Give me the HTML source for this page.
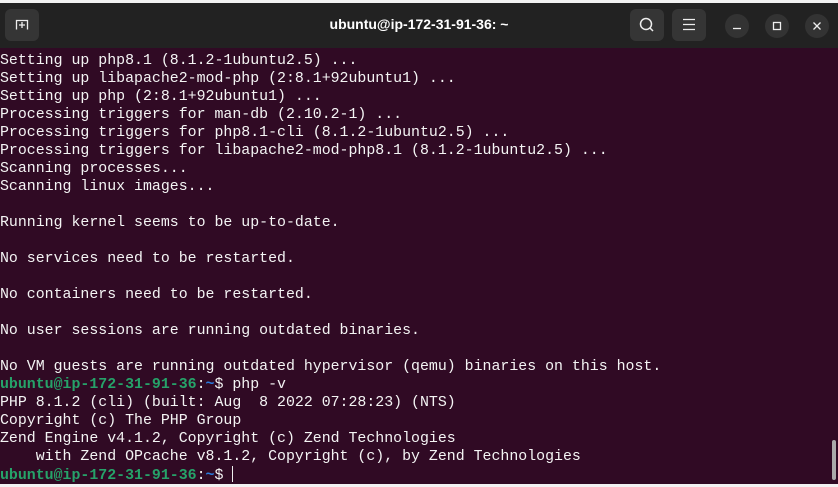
<!DOCTYPE html>
<html><head><meta charset="utf-8"><style>
html,body{margin:0;padding:0;width:838px;height:487px;overflow:hidden;background:#f2f2f2}
.win{position:absolute;left:0;top:3px;width:838px;height:481px;background:#300a24}
.hdr{position:absolute;left:0;top:0;width:838px;height:45px;background:#222222}
.title{position:absolute;left:0;width:838px;top:13px;text-align:center;color:#fff;font:bold 14px "Liberation Sans",sans-serif}
.btn{position:absolute;top:6px;width:34px;height:32px;border-radius:6px;background:#353535}
.cb{position:absolute;top:11px;width:24px;height:24px;border-radius:12px;background:#333}
pre{position:absolute;left:0;top:49px;margin:0;font:14.9px/18px "Liberation Mono",monospace;color:#f4f4f4;white-space:pre}
.g{color:#26a269;font-weight:bold}.b{color:#2a7bde;font-weight:bold}
.sb{position:absolute;left:832px;top:437px;width:4px;height:40px;border-radius:2px;background:#aaa}
</style></head><body>
<div class="win">
<div class="hdr">
<div class="btn" style="left:5px;top:6px"><svg width="34" height="32"><path d="M11.5 20.5 V11.5 H22.5 V20.5 M14 16 H20 M17 13 V19" stroke="#eee" stroke-width="1.3" fill="none"/></svg></div>
<div class="title">ubuntu@ip-172-31-91-36: ~</div>
<div class="btn" style="left:630px"><svg width="34" height="32"><circle cx="16" cy="15" r="5.5" stroke="#eee" stroke-width="1.5" fill="none"/><path d="M20 19 L23 22" stroke="#eee" stroke-width="1.5"/></svg></div>
<div class="btn" style="left:672px"><svg width="34" height="32"><path d="M11 10.5H23M11 15.5H23M11 20.5H23" stroke="#eee" stroke-width="1.3"/></svg></div>
<div class="cb" style="left:725px"><svg width="24" height="24"><path d="M8 14.5H16" stroke="#eee" stroke-width="1.3"/></svg></div>
<div class="cb" style="left:765px"><svg width="24" height="24"><rect x="8.5" y="8.5" width="7" height="7" stroke="#eee" stroke-width="1.3" fill="none"/></svg></div>
<div class="cb" style="left:805px"><svg width="24" height="24"><path d="M8.5 8.5L15.5 15.5M15.5 8.5L8.5 15.5" stroke="#eee" stroke-width="1.3"/></svg></div>
</div>
<pre>Setting up php8.1 (8.1.2-1ubuntu2.5) ...
Setting up libapache2-mod-php (2:8.1+92ubuntu1) ...
Setting up php (2:8.1+92ubuntu1) ...
Processing triggers for man-db (2.10.2-1) ...
Processing triggers for php8.1-cli (8.1.2-1ubuntu2.5) ...
Processing triggers for libapache2-mod-php8.1 (8.1.2-1ubuntu2.5) ...
Scanning processes...
Scanning linux images...

Running kernel seems to be up-to-date.

No services need to be restarted.

No containers need to be restarted.

No user sessions are running outdated binaries.

No VM guests are running outdated hypervisor (qemu) binaries on this host.
<span class="g">ubuntu@ip-172-31-91-36</span>:<span class="b">~</span>$ php -v
PHP 8.1.2 (cli) (built: Aug  8 2022 07:28:23) (NTS)
Copyright (c) The PHP Group
Zend Engine v4.1.2, Copyright (c) Zend Technologies
    with Zend OPcache v8.1.2, Copyright (c), by Zend Technologies
<span class="g">ubuntu@ip-172-31-91-36</span>:<span class="b">~</span>$ <span style="display:inline-block;width:1px;height:16px;background:#eee;vertical-align:-3px"></span></pre>
<div class="sb"></div>
</div>
</body></html>
